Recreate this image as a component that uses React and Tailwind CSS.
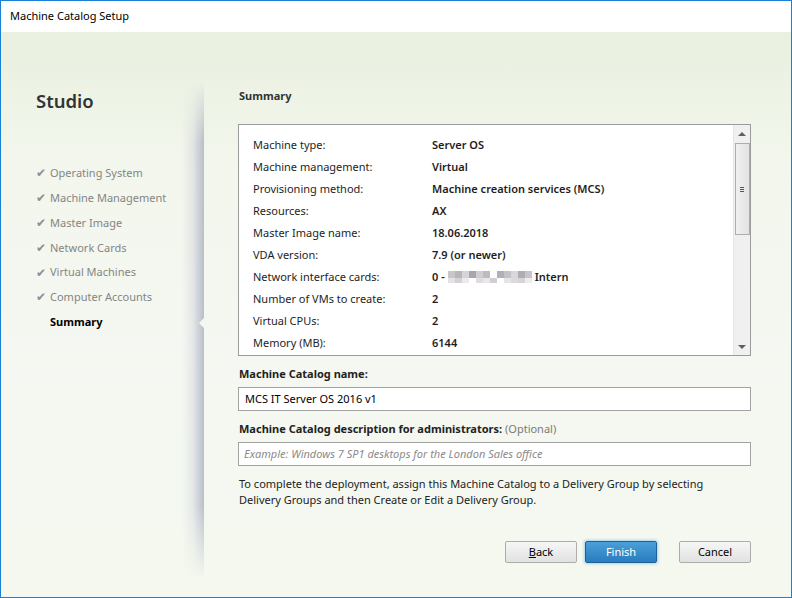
import React from "react";

const font = { fontFamily: '"Noto Sans", "Open Sans", sans-serif' };

const steps = [
  "Operating System",
  "Machine Management",
  "Master Image",
  "Network Cards",
  "Virtual Machines",
  "Computer Accounts",
];

const rows = [
  ["Machine type:", "Server OS"],
  ["Machine management:", "Virtual"],
  ["Provisioning method:", "Machine creation services (MCS)"],
  ["Resources:", "AX"],
  ["Master Image name:", "18.06.2018"],
  ["VDA version:", "7.9 (or newer)"],
  ["Network interface cards:", "NIC"],
  ["Number of VMs to create:", "2"],
  ["Virtual CPUs:", "2"],
  ["Memory (MB):", "6144"],
];

function Blur() {
  const a = ["#c9c6c9", "#b8b6ba", "#d7d4d6", "#a9a7ab", "#cfcdd1", "#bdbbc0", "#e0dee0", "#b1b0b5", "#c4c2c7", "#d9d7da", "#aeadb2", "#c7c5ca"];
  const b = ["#e4e2e4", "#d3d1d4", "#eceaeb", "#ffffff", "#dedcde", "#e9e7e9", "#d0ced2", "#ffffff", "#e6e4e6", "#dbd9dc", "#d6d4d8", "#ececee"];
  return (
    <span className="inline-flex flex-col mx-[3px] align-middle">
      <span className="flex">
        {a.map((c, i) => (
          <span key={i} className="w-[7px] h-[7px]" style={{ background: i === 6 ? "#fff" : c }} />
        ))}
      </span>
      <span className="flex">
        {b.map((c, i) => (
          <span key={i} className="w-[7px] h-[5px]" style={{ background: c }} />
        ))}
      </span>
    </span>
  );
}

export default function App() {
  return (
    <div
      className="w-[792px] h-[598px] border border-[#1a7fd6] bg-white flex flex-col text-[11px] text-[#1e1e1e] overflow-hidden"
      style={font}
    >
      <div className="h-[31px] shrink-0 flex items-center pl-[9px] text-[11px] text-black bg-white">
        Machine Catalog Setup
      </div>
      <div className="flex-1 flex bg-[linear-gradient(180deg,#e9f0df_0%,#f2f6ec_22%,#f5f8f2_60%,#f4f8ef_100%)]">
        {/* sidebar */}
        <div className="relative w-[203px] shrink-0 flex flex-col pl-[35px] pt-[55px]">
          <div className="text-[18.5px] font-semibold text-[#333333] leading-[28px]">Studio</div>
          <div className="mt-[46px] flex flex-col">
            {steps.map((s) => (
              <div key={s} className="h-[24.8px] flex items-center text-[#858585]">
                <span className="w-[14px] text-[12px] text-[#8f8f8f]">✔</span>
                <span>{s}</span>
              </div>
            ))}
            <div className="h-[24.8px] flex items-center pl-[14px] font-bold text-black">Summary</div>
          </div>
          <div className="absolute right-0 top-[50px] bottom-[18px] w-[22px] bg-[linear-gradient(90deg,rgba(200,204,214,0)_0%,rgba(196,200,212,0.35)_50%,rgba(178,183,198,0.9)_100%)] [mask-image:linear-gradient(180deg,transparent_0%,black_12%,black_85%,transparent_100%)]" />
          <div className="absolute right-0 top-[286px] w-0 h-0 border-y-[5px] border-y-transparent border-r-[5px] border-r-[#f5f8f2]" />
        </div>
        {/* main */}
        <div className="flex-1 flex flex-col pl-[35px] pr-[40px] pt-[56px]">
          <div className="font-bold text-[#333333] leading-[16px]">Summary</div>
          <div className="mt-[20px] h-[232px] border border-[#9b9b9b] bg-white flex overflow-hidden -ml-px">
            <div className="flex-1 pt-[9px] pl-[14px] overflow-hidden">
              {rows.map(([k, v]) => (
                <div key={k} className="h-[22px] flex items-center">
                  <span className="w-[179px] shrink-0">{k}</span>
                  {v === "NIC" ? (
                    <span className="font-semibold flex items-center">
                      0 -<Blur />Intern
                    </span>
                  ) : (
                    <span className="font-semibold">{v}</span>
                  )}
                </div>
              ))}
            </div>
            <div className="w-[17px] shrink-0 bg-[#f0f0f0] border-l border-[#e6e6e6] flex flex-col items-center">
              <div className="h-[18px] flex items-center justify-center">
                <div className="w-0 h-0 border-x-[4px] border-x-transparent border-b-[4px] border-b-[#606060]" />
              </div>
              <div className="w-[15px] h-[92px] border border-[#adadad] bg-[linear-gradient(90deg,#f0f0f0,#e3e3e3)] flex items-center justify-center">
                <div className="flex flex-col gap-[1px]">
                  <div className="w-[4px] h-px bg-[#555]" />
                  <div className="w-[4px] h-px bg-[#555]" />
                  <div className="w-[4px] h-px bg-[#555]" />
                </div>
              </div>
              <div className="flex-1" />
              <div className="h-[16px] flex items-center justify-center">
                <div className="w-0 h-0 border-x-[4px] border-x-transparent border-t-[4px] border-t-[#606060]" />
              </div>
            </div>
          </div>

          <div className="mt-[10px] font-bold leading-[16px] text-[#222]">Machine Catalog name:</div>
          <div className="mt-[5px] -ml-px h-[24px] border border-[#a3a3a3] bg-white flex items-center pl-[6px] text-black">
            MCS IT Server OS 2016 v1
          </div>

          <div className="mt-[10px] leading-[16px] text-[#222]">
            <span className="font-bold">Machine Catalog description for administrators:</span>{" "}
            <span className="text-[#7a7a7a]">(Optional)</span>
          </div>
          <div className="mt-[5px] -ml-px h-[24px] border border-[#a3a3a3] bg-white flex items-center pl-[5px] italic text-[#8a8a8a]">
            Example: Windows 7 SP1 desktops for the London Sales office
          </div>

          <div className="mt-[10px] leading-[16px] text-[#222]">
            To complete the deployment, assign this Machine Catalog to a Delivery Group by selecting
            <br />
            Delivery Groups and then Create or Edit a Delivery Group.
          </div>

          <div className="mt-[33px] flex justify-end items-center">
            <button className="w-[72px] h-[22px] rounded-[2px] border border-[#acacac] bg-[linear-gradient(180deg,#f6f6f6,#e1e1e1)] text-black text-[11px]" style={font}>
              <span className="underline">B</span>ack
            </button>
            <button className="ml-[8px] w-[72px] h-[22px] rounded-[2px] border border-[#1d5f9b] bg-[linear-gradient(180deg,#4aa0d8,#2a7cbd)] text-white text-[11px] shadow-[0_0_3px_1px_rgba(120,180,230,0.6)]" style={font}>
              Finish
            </button>
            <button className="ml-[22px] w-[72px] h-[22px] rounded-[2px] border border-[#acacac] bg-[linear-gradient(180deg,#f6f6f6,#e1e1e1)] text-black text-[11px]" style={font}>
              Cancel
            </button>
          </div>
        </div>
      </div>
    </div>
  );
}
